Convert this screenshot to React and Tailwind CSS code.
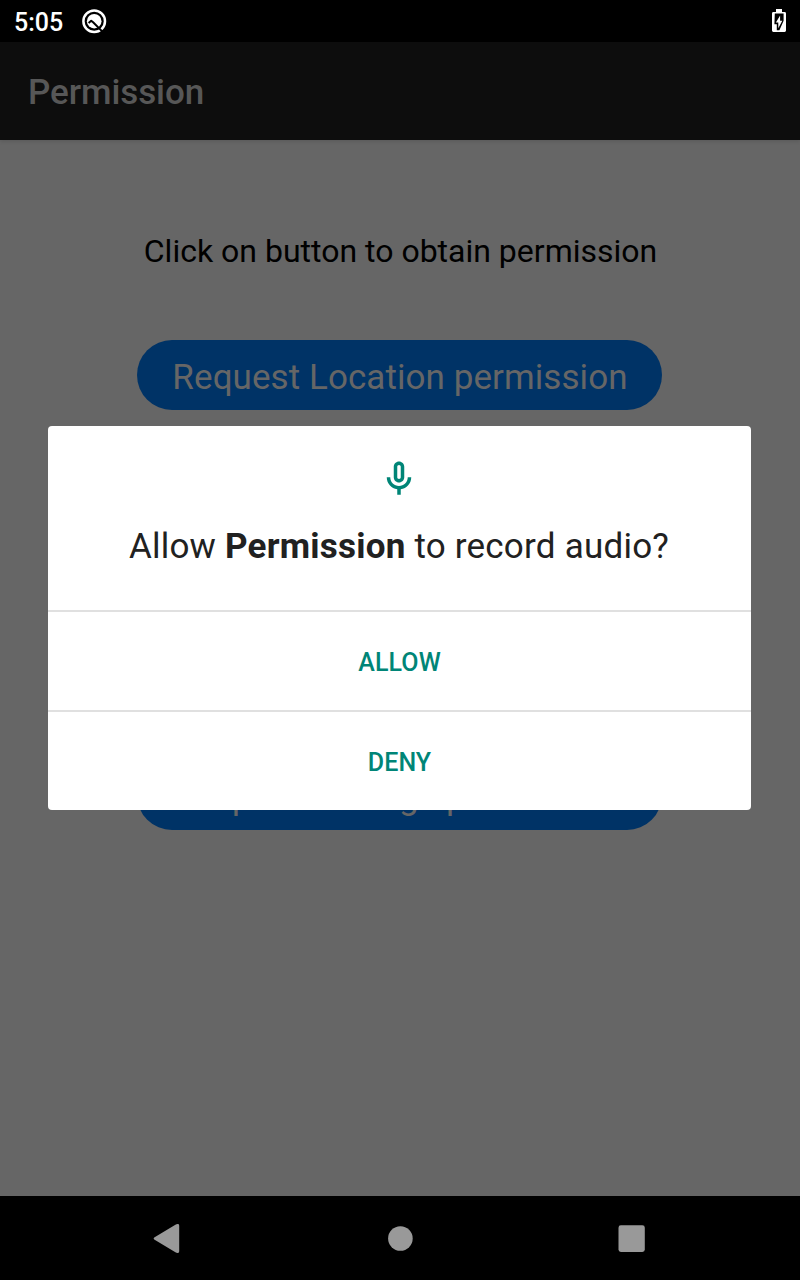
import React from "react";

function StatusBar() {
  return (
    <div className="flex h-[42px] items-center justify-between bg-black pl-[14px] pr-[14px]">
      <div className="flex items-center">
        <span className="w-[66px] pt-[4px] text-[25px] leading-[28px] font-medium text-white">5:05</span>
        <svg className="h-[28px] w-[28px]" viewBox="0 0 28 28" fill="none">
          <circle cx="14.2" cy="14.2" r="10.8" stroke="#fff" strokeWidth="2.5" />
          <circle cx="14.2" cy="14.2" r="7.3" fill="#fff" />
          <path d="M8.6 15.9l2.6-2.2 1.9 1.6 9.8 9.8" stroke="#000" strokeWidth="2" strokeLinejoin="round" />
        </svg>
      </div>
      <svg className="h-[24px] w-[14px]" viewBox="0 0 14 24">
        <path fill="#fff" d="M4 0h6v3h2.6Q14 3 14 4.4v17.2q0 1.4-1.4 1.4H1.4Q0 23 0 21.6V4.4Q0 3 1.4 3H4z" />
        <path fill="#000" d="M2.8 4.6h8.8v7.2l-4.2 9.4H4.8v-6H2.4z" />
        <path fill="#fff" d="M8.1 6.6v5.2h2.2l-4 7.4v-5.6H3.9z" />
      </svg>
    </div>
  );
}

function PillButton({ children }) {
  return (
    <button className="flex h-[70px] w-[525px] items-center justify-center rounded-full bg-[#003366] pt-[4px] pl-px text-[35px] leading-[41px] tracking-[0.07px] text-[#666666]">
      {children}
    </button>
  );
}

function PermissionDialog() {
  return (
    <div role="dialog" className="absolute top-[426px] left-[48px] flex h-[384px] w-[703px] flex-col rounded-[4px] bg-white text-center">
      <div className="flex h-[184px] flex-col items-center pt-[32px]">
        <svg className="mr-px h-[42px] w-[42px]" viewBox="0 0 24 24" fill="#008577">
          <path d="M12 14c1.66 0 3-1.34 3-3V5c0-1.66-1.34-3-3-3S9 3.34 9 5v6c0 1.66 1.34 3 3 3zm-1-9c0-.55.45-1 1-1s1 .45 1 1v6c0 .55-.45 1-1 1s-1-.45-1-1V5zm6 6c0 2.76-2.24 5-5 5s-5-2.24-5-5H5c0 3.53 2.61 6.43 6 6.92V21h2v-3.08c3.39-.49 6-3.39 6-6.92h-2z" />
        </svg>
        <p className="mt-[26px] pr-px text-[35px] leading-[41px] tracking-[0.22px] text-[#212121]">
          Allow <b className="font-bold">Permission</b> to record audio?
        </p>
      </div>
      <button className="flex h-[100px] items-center justify-center border-t-2 border-[#e0e0e0] pt-[4px] text-[25px] font-medium tracking-[0.1px] text-[#008577]">ALLOW</button>
      <button className="flex h-[100px] items-center justify-center border-t-2 border-[#e0e0e0] pt-[4px] text-[25px] font-medium tracking-[0.1px] text-[#008577]">DENY</button>
    </div>
  );
}

function NavigationBar() {
  return (
    <div className="flex h-[84px] items-center bg-black">
      <svg className="h-[84px] w-full" viewBox="0 0 800 84" fill="#999999">
        <path d="M154.2 43.6q-1.2-1.1 0-2.2L175.4 28.7q1.6-1 2.8-.6 1 .4 1 1.6v25.6q0 1.2-1 1.6-1.2.4-2.8-.6z" />
        <circle cx="400.4" cy="42.5" r="12.3" />
        <rect x="618.5" y="29.3" width="26.3" height="26.6" rx="2.4" />
      </svg>
    </div>
  );
}

export default function App() {
  return (
    <div className="relative flex h-[1280px] w-[800px] flex-col overflow-hidden bg-[#666666] font-['Roboto',sans-serif]">
      <StatusBar />
      <header className="flex h-[98px] items-center bg-[#0d0d0d] pt-[2px] pl-[28px] shadow-[0_1px_4px_rgba(0,0,0,0.15)]">
        <h1 className="text-[35px] leading-[41px] font-medium tracking-[-0.08px] text-[#575757]">Permission</h1>
      </header>
      <main className="flex flex-1 flex-col items-center pr-px">
        <p className="mt-[92px] h-[108px] pl-[2px] text-[32px] leading-[38px] text-black">Click on button to obtain permission</p>
        <div className="flex flex-col gap-[350px]">
          <PillButton>Request Location permission</PillButton>
          <PillButton>Request Storage permission</PillButton>
        </div>
      </main>
      <NavigationBar />
      <PermissionDialog />
    </div>
  );
}
